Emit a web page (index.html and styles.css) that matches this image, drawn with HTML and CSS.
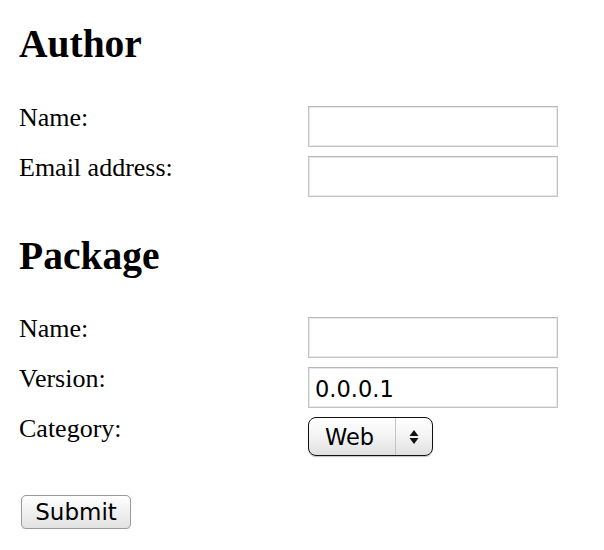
FILE: index.html
```html
<!DOCTYPE html>
<html>
<head>
<meta charset="utf-8">
<link rel="stylesheet" href="styles.css">
</head>
<body>
<form class="page">
  <h2 class="title title-first">Author</h2>
  <div class="fields">
    <label class="label">Name:</label>
    <input class="text" type="text">
    <label class="label">Email address:</label>
    <input class="text" type="text">
  </div>
  <h2 class="title title-second">Package</h2>
  <div class="fields fields-second">
    <label class="label">Name:</label>
    <input class="text" type="text">
    <label class="label">Version:</label>
    <input class="text" type="text" value="0.0.0.1">
    <label class="label">Category:</label>
    <div class="select">
      <span class="select-value">Web</span>
      <span class="select-arrows">
        <svg width="10" height="16" viewBox="0 0 10 16"><path d="M5 1 L9.5 7 H0.5 Z M5 15 L9.5 9 H0.5 Z" fill="#111"/></svg>
      </span>
    </div>
  </div>
  <div class="actions">
    <button type="button" class="submit">Submit</button>
  </div>
</form>
</body>
</html>
```
FILE: styles.css
```css
html, body {
  margin: 0;
  padding: 0;
  background: #fff;
}
.page {
  padding: 22px 0 0 19px;
  font-family: "Liberation Serif", "Times New Roman", serif;
  color: #000;
}
.title {
  margin: 0;
  font-size: 39.5px;
  line-height: 44px;
  font-weight: bold;
}
.title-second {
  margin-top: 37px;
}
.fields {
  display: grid;
  grid-template-columns: 289px 250px;
  row-gap: 9px;
  margin-top: 40px;
}
.fields-second {
  margin-top: 39px;
}
.label {
  font-size: 26px;
  line-height: 24px;
}
.text {
  box-sizing: border-box;
  width: 250px;
  height: 41px;
  margin: 0;
  border: 1px solid #c4c4c4;
  border-top-color: #b8b8b8;
  box-shadow: inset 0 0 0 1px #e8e8e8;
  padding: 2px 6px 0;
  font-family: "DejaVu Sans", "Lucida Grande", sans-serif;
  font-size: 22.5px;
  color: #000;
  background: #fff;
  outline: none;
}
.select {
  box-sizing: border-box;
  width: 125px;
  height: 39px;
  border: 1px solid #111;
  border-radius: 8px;
  background: linear-gradient(#ffffff, #f3f3f3 50%, #e0e0e0);
  box-shadow: 0 1px 1px rgba(0,0,0,0.25);
  display: flex;
  align-items: stretch;
  font-family: "DejaVu Sans", "Lucida Grande", sans-serif;
  font-size: 22.5px;
}
.select-value {
  flex: 1;
  display: flex;
  align-items: center;
  padding-left: 16px;
  border-right: 1px solid #c4c4c4;
}
.select-arrows {
  width: 36px;
  display: flex;
  align-items: center;
  justify-content: center;
}
.actions {
  margin-top: 39px;
  padding-left: 2px;
}
.submit {
  box-sizing: border-box;
  width: 110px;
  height: 34px;
  margin: 0;
  border: 1px solid #9a9a9a;
  border-radius: 5px;
  background: linear-gradient(#ffffff, #f0f0f0 50%, #e2e2e2);
  box-shadow: 0 1px 1px rgba(0,0,0,0.15);
  font-family: "DejaVu Sans", "Lucida Grande", sans-serif;
  font-size: 23px;
  color: #000;
  padding: 0;
  line-height: 32px;
}
```
